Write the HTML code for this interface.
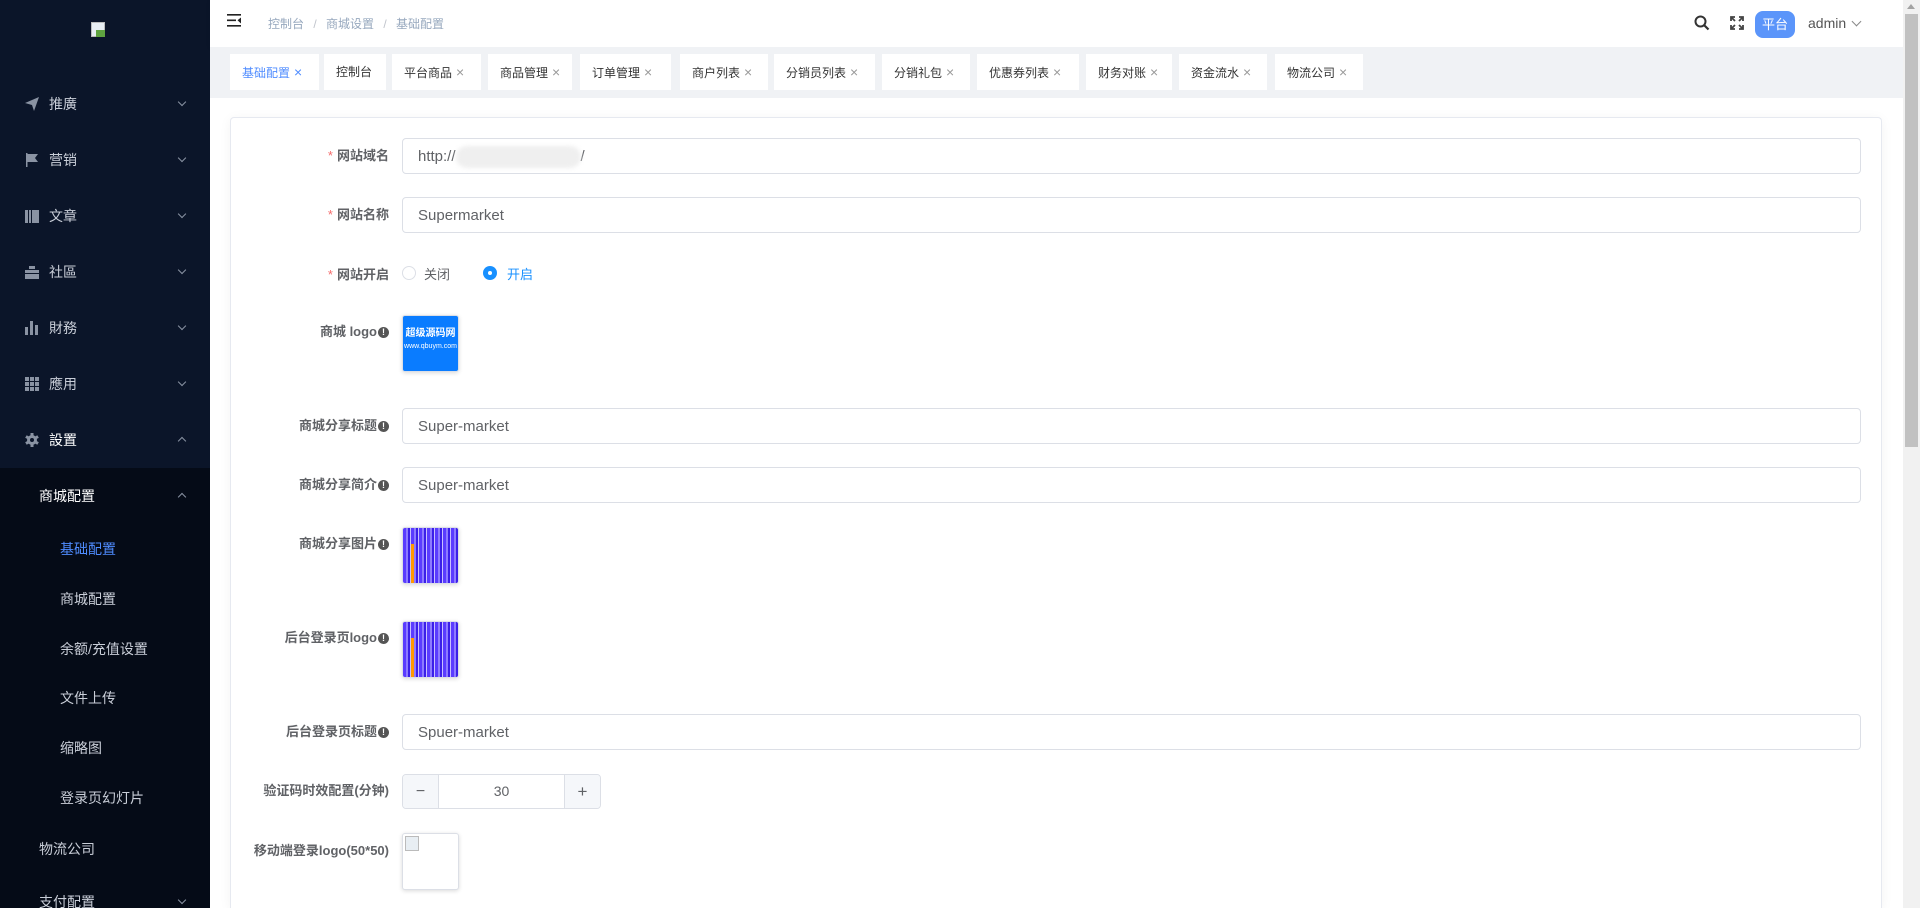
<!DOCTYPE html>
<html style="width:1920px;height:908px;overflow:hidden"><head><meta charset="utf-8"><style>
*{margin:0;padding:0;box-sizing:border-box}
body{width:1920px;height:908px;overflow:hidden;background:#fff;font-family:"Liberation Sans","Noto Sans CJK SC",sans-serif;position:relative}
.a{position:absolute}
#side{left:0;top:0;width:210px;height:908px;background:#0b1529}
#sub{left:0;top:468px;width:210px;height:440px;background:#050b17}
.mi{position:absolute;left:0;width:210px;height:20px;line-height:20px;font-size:14px;color:#c9ced8}
.mi .ic{position:absolute;left:25px;top:3px;width:14px;height:14px}
.mi .t{position:absolute;left:49px}
.chev{position:absolute;left:179px;top:5px;width:6px;height:6px;border-right:1px solid #8a93a3;border-bottom:1px solid #8a93a3;transform:rotate(45deg)}
.chev.up{transform:rotate(-135deg);top:8px}
#hdr{left:210px;top:0;width:1693px;height:47px;background:#fff;box-shadow:0 1px 4px rgba(0,21,41,.08)}
#tabs{left:210px;top:47px;width:1693px;height:51px;background:#f0f2f5}
.tab{position:absolute;top:7px;height:36px;background:#fff;font-size:12px;color:#333;line-height:36px;padding-left:12px}
.tab .x{color:#999;margin-left:4px;font-size:14px}
#card{left:230px;top:117px;width:1652px;height:791px;border:1px solid #e6e9f0;border-bottom:none;border-radius:4px 4px 0 0;background:#fff;box-shadow:0 2px 12px rgba(0,0,0,.05)}
.lb{position:absolute;right:1531px;font-size:13px;color:#606266;font-weight:bold;text-align:right;white-space:nowrap}
.lb .r{color:#f56c6c;font-weight:normal;margin-right:4px}
.inp{position:absolute;left:402px;width:1459px;height:36px;border:1px solid #dcdfe6;border-radius:4px;font-size:15px;color:#606266;line-height:36px;padding-left:15px}
.info{display:inline-block;width:11px;height:11px;border-radius:50%;background:#555;color:#fff;font-size:9px;line-height:11px;text-align:center;vertical-align:1px;margin-left:1px}
.img{position:absolute;left:402px;width:57px;height:57px;border:1px solid #dcdfe6;border-radius:3px;box-shadow:0 1px 4px rgba(0,0,0,.15);overflow:hidden}
.pur{background:repeating-linear-gradient(90deg,#5a3cff 0 3px,#8d7bff 3px 5px,#3a1fe8 5px 7px,#c8c0ff 7px 8px)}
</style></head><body>
<div id="side" class="a"></div>
<div id="sub" class="a"></div>
<div class="a" style="left:91px;top:22px;width:14px;height:15px;background:#e8eef3;border:1px solid #bbb"></div>
<div class="a" style="left:96px;top:30px;width:9px;height:7px;background:#5fa340"></div>

<div class="mi" style="top:94px"><svg class="ic" viewBox="0 0 14 14"><path d="M0 6L14 0L9 14L7 8Z" fill="#8a93a3"/></svg><span class="t">推廣</span><i class="chev"></i></div>
<div class="mi" style="top:150px"><svg class="ic" viewBox="0 0 14 14"><path d="M1 0h1.5v14H1zM2.5 1H13l-3 4 3 4H2.5z" fill="#8a93a3"/></svg><span class="t">营销</span><i class="chev"></i></div>
<div class="mi" style="top:206px"><svg class="ic" viewBox="0 0 14 14"><path d="M0 1h3v13H0zM4 1h2v13H4zM7 1h7v13H7z" fill="#8a93a3"/></svg><span class="t">文章</span><i class="chev"></i></div>
<div class="mi" style="top:262px"><svg class="ic" viewBox="0 0 14 14"><path d="M4 1h6v3H4zM0 5h14v3H0zM0 9h14v5H0z" fill="#8a93a3"/></svg><span class="t">社區</span><i class="chev"></i></div>
<div class="mi" style="top:318px"><svg class="ic" viewBox="0 0 14 14"><path d="M0 6h3v8H0zM5 0h3v14H5zM10 4h3v10h-3z" fill="#8a93a3"/></svg><span class="t">財務</span><i class="chev"></i></div>
<div class="mi" style="top:374px"><svg class="ic" viewBox="0 0 14 14"><path d="M0 0h4v4H0zM5 0h4v4H5zM10 0h4v4h-4zM0 5h4v4H0zM5 5h4v4H5zM10 5h4v4h-4zM0 10h4v4H0zM5 10h4v4H5zM10 10h4v4h-4z" fill="#8a93a3"/></svg><span class="t">應用</span><i class="chev"></i></div>
<div class="mi" style="top:430px;color:#fff"><svg class="ic" viewBox="0 0 14 14"><g fill="#8a93a3"><rect x="5.5" y="0" width="3" height="14"/><rect x="5.5" y="0" width="3" height="14" transform="rotate(60 7 7)"/><rect x="5.5" y="0" width="3" height="14" transform="rotate(120 7 7)"/><circle cx="7" cy="7" r="5"/></g><circle cx="7" cy="7" r="2" fill="#0b1529"/></svg><span class="t">設置</span><i class="chev up"></i></div>
<div class="mi" style="top:486px;color:#fff"><span class="t" style="left:39px">商城配置</span><i class="chev up"></i></div>
<div class="mi" style="top:539px;color:#4f8cff"><span class="t" style="left:60px">基础配置</span></div>
<div class="mi" style="top:589px"><span class="t" style="left:60px">商城配置</span></div>
<div class="mi" style="top:639px"><span class="t" style="left:60px">余额/充值设置</span></div>
<div class="mi" style="top:688px"><span class="t" style="left:60px">文件上传</span></div>
<div class="mi" style="top:738px"><span class="t" style="left:60px">缩略图</span></div>
<div class="mi" style="top:788px"><span class="t" style="left:60px">登录页幻灯片</span></div>
<div class="mi" style="top:839px"><span class="t" style="left:39px">物流公司</span></div>
<div class="mi" style="top:892px"><span class="t" style="left:39px">支付配置</span><i class="chev"></i></div>

<div id="hdr" class="a">
<svg class="a" style="left:17px;top:14px" width="14" height="13" viewBox="0 0 14 13"><path d="M0 0h14v1.6H0zM0 5.5h9v1.6H0zM0 11h14v1.6H0z" fill="#222"/><path d="M14 3.5v6L10.5 6.3z" fill="#222"/></svg>
<div class="a" style="left:58px;top:15px;font-size:12px;color:#97a8be;white-space:nowrap">控制台 <span style="margin:0 6px;color:#c0c4cc">/</span> 商城设置 <span style="margin:0 6px;color:#c0c4cc">/</span> 基础配置</div>
<svg class="a" style="left:1484px;top:15px" width="16" height="16" viewBox="0 0 16 16"><circle cx="6.5" cy="6.5" r="5" stroke="#333" stroke-width="2" fill="none"/><path d="M10 10l4.5 4.5" stroke="#333" stroke-width="2.2"/></svg>
<svg class="a" style="left:1520px;top:16px" width="14" height="14" viewBox="0 0 14 14" stroke="#444" stroke-width="1.8" fill="none"><path d="M1 1l4 4M1 5V1h4M13 1L9 5M9 1h4v4M1 13l4-4M1 9v4h4M13 13L9 9M13 9v4H9"/></svg>
<div class="a" style="left:1545px;top:11px;width:40px;height:27px;border-radius:8px;background:#5b95fa;color:#fff;font-size:13px;line-height:27px;text-align:center">平台</div>
<div class="a" style="left:1598px;top:15px;font-size:14px;color:#555">admin</div>
<i class="a" style="left:1643px;top:18px;width:7px;height:7px;border-right:1px solid #888;border-bottom:1px solid #888;transform:rotate(45deg)"></i>
</div>

<div id="tabs" class="a">
<div class="tab" style="left:20px;width:89px;color:#4f8cff">基础配置<span class="x" style="color:#4f8cff">×</span></div>
<div class="tab" style="left:114px;width:62px">控制台</div>
<div class="tab" style="left:182px;width:89px">平台商品<span class="x">×</span></div>
<div class="tab" style="left:278px;width:84px">商品管理<span class="x">×</span></div>
<div class="tab" style="left:370px;width:91px">订单管理<span class="x">×</span></div>
<div class="tab" style="left:470px;width:88px">商户列表<span class="x">×</span></div>
<div class="tab" style="left:564px;width:101px">分销员列表<span class="x">×</span></div>
<div class="tab" style="left:672px;width:88px">分销礼包<span class="x">×</span></div>
<div class="tab" style="left:767px;width:102px">优惠券列表<span class="x">×</span></div>
<div class="tab" style="left:876px;width:86px">财务对账<span class="x">×</span></div>
<div class="tab" style="left:969px;width:88px">资金流水<span class="x">×</span></div>
<div class="tab" style="left:1065px;width:88px">物流公司<span class="x">×</span></div>
</div>

<div id="card" class="a"></div>

<div class="lb" style="top:145px"><span class="r">*</span>网站域名</div>
<div class="inp" style="top:138px">http://<span style="display:inline-block;width:125px;height:22px;background:#efefef;border-radius:11px;vertical-align:middle;filter:blur(2px)"></span>/</div>
<div class="lb" style="top:204px"><span class="r">*</span>网站名称</div>
<div class="inp" style="top:197px">Supermarket</div>
<div class="lb" style="top:264px"><span class="r">*</span>网站开启</div>
<div class="a" style="left:402px;top:266px;width:14px;height:14px;border:1px solid #dcdfe6;border-radius:50%"></div>
<div class="a" style="left:424px;top:264px;font-size:13px;color:#606266">关闭</div>
<div class="a" style="left:483px;top:266px;width:14px;height:14px;border-radius:50%;background:#1890ff"><div style="width:4px;height:4px;background:#fff;border-radius:50%;margin:5px"></div></div>
<div class="a" style="left:507px;top:264px;font-size:13px;color:#1890ff">开启</div>

<div class="lb" style="top:321px">商城 logo<span class="info">!</span></div>
<div class="img" style="top:315px;background:#0a7cff;color:#fff;text-align:center;font-size:10px;line-height:12px;padding-top:12px;font-weight:bold">超级源码网<br><span style="font-size:7px;font-weight:normal">www.qbuym.com</span></div>

<div class="lb" style="top:415px">商城分享标题<span class="info">!</span></div>
<div class="inp" style="top:408px">Super-market</div>
<div class="lb" style="top:474px">商城分享简介<span class="info">!</span></div>
<div class="inp" style="top:467px">Super-market</div>
<div class="lb" style="top:533px">商城分享图片<span class="info">!</span></div>
<div class="img pur" style="top:527px"><div style="position:absolute;left:8px;top:16px;width:3px;height:40px;background:#f90"></div></div>
<div class="lb" style="top:627px">后台登录页logo<span class="info">!</span></div>
<div class="img pur" style="top:621px"><div style="position:absolute;left:8px;top:16px;width:3px;height:40px;background:#f90"></div></div>
<div class="lb" style="top:721px">后台登录页标题<span class="info">!</span></div>
<div class="inp" style="top:714px">Spuer-market</div>
<div class="lb" style="top:780px">验证码时效配置(分钟)</div>
<div class="a" style="left:402px;top:774px;width:199px;height:35px;border:1px solid #dcdfe6;border-radius:4px;overflow:hidden">
<div class="a" style="left:0;top:0;width:36px;height:33px;background:#f5f7fa;border-right:1px solid #dcdfe6;color:#606266;text-align:center;line-height:33px;font-size:16px">−</div>
<div class="a" style="left:36px;top:0;width:125px;height:33px;text-align:center;line-height:33px;font-size:14px;color:#606266">30</div>
<div class="a" style="right:0;top:0;width:36px;height:33px;background:#f5f7fa;border-left:1px solid #dcdfe6;color:#606266;text-align:center;line-height:33px;font-size:17px">+</div>
</div>
<div class="lb" style="top:840px">移动端登录logo(50*50)</div>
<div class="img" style="top:833px;background:#fff"><div style="position:absolute;left:2px;top:2px;width:14px;height:15px;background:#e8eef3;border:1px solid #bbb"></div></div>

<div class="a" style="left:1903px;top:0;width:17px;height:908px;background:#f1f1f1"></div>
<div class="a" style="left:1905px;top:14px;width:13px;height:433px;background:#c1c1c1"></div>
<div class="a" style="left:1907px;top:4px;width:0;height:0;border-left:4px solid transparent;border-right:4px solid transparent;border-bottom:5px solid #a3a3a3"></div>
</body></html>
